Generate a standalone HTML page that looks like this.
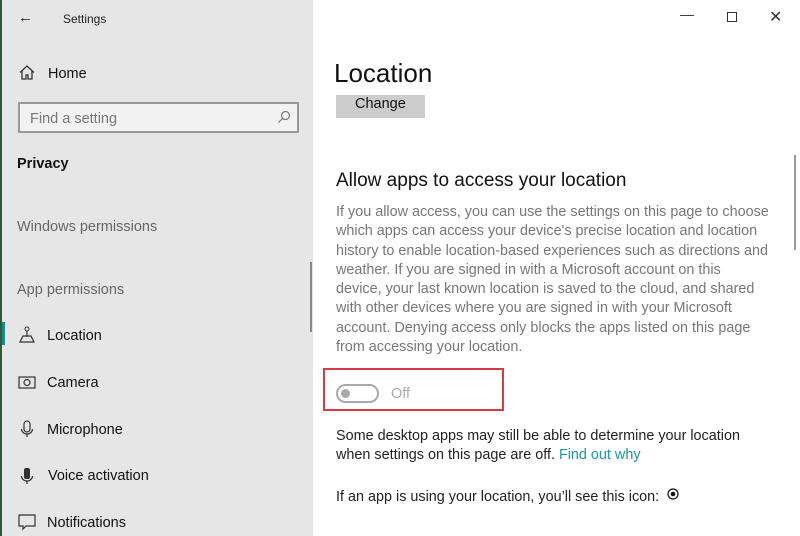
<!DOCTYPE html>
<html><head><style>
*{margin:0;padding:0;box-sizing:border-box}
body{width:800px;height:536px;overflow:hidden;font-family:"Liberation Sans",sans-serif;background:#fff;position:relative}
.side{position:absolute;left:0;top:0;width:313px;height:536px;background:#e6e6e6;border-left:2px solid #2a5a3a}
.t{position:absolute;white-space:nowrap}
.ic{position:absolute}
.p{position:absolute;left:336px;font-size:14.4px;line-height:19.3px;white-space:nowrap}
</style></head><body>
<div class="side">
<div class="t" style="left:16px;top:9px;font-size:15px;color:#222">&#8592;</div>
<div class="t" style="left:61px;top:12px;font-size:12px;color:#222">Settings</div>
<svg class="ic" style="left:17px;top:65px" width="16" height="15" viewBox="0 0 16 15"><path d="M1 7.5L8 1l7 6.5M3 6v8h4v-4h2v4h4V6" fill="none" stroke="#333" stroke-width="1.3"/></svg>
<div class="t" style="left:46px;top:66px;font-size:14.5px;color:#111">Home</div>
<div style="position:absolute;left:16px;top:102px;width:281px;height:31px;border:2px solid #999;background:#f2f2f2"></div>
<div class="t" style="left:28px;top:111px;font-size:14.5px;color:#777">Find a setting</div>
<svg class="ic" style="left:275px;top:110px" width="14" height="14"><circle cx="8.5" cy="5.5" r="4" fill="none" stroke="#777" stroke-width="1.2"/><path d="M5.5 8.5L1.5 12.5" stroke="#777" stroke-width="1.2"/></svg>
<div class="t" style="left:15px;top:156px;font-size:14.5px;font-weight:bold;color:#111">Privacy</div>
<div class="t" style="left:15px;top:219px;font-size:14.5px;color:#666">Windows permissions</div>
<div class="t" style="left:15px;top:282px;font-size:14.5px;color:#666">App permissions</div>
<div style="position:absolute;left:0;top:322px;width:3px;height:23px;background:#1a8a8a"></div>
<svg class="ic" style="left:16px;top:326px" width="18" height="17"><circle cx="9" cy="3" r="2" fill="none" stroke="#333"/><path d="M9 5v6M2 16l3-6h8l3 6z" fill="none" stroke="#333" stroke-width="1.2"/></svg>
<div class="t" style="left:45px;top:328px;font-size:14.5px;color:#111">Location</div>
<svg class="ic" style="left:16px;top:375px" width="18" height="14"><rect x="1" y="2" width="16" height="11" fill="none" stroke="#333" stroke-width="1.2"/><circle cx="9" cy="7.5" r="3" fill="none" stroke="#333" stroke-width="1.2"/></svg>
<div class="t" style="left:45px;top:375px;font-size:14.5px;color:#111">Camera</div>
<svg class="ic" style="left:18px;top:420px" width="14" height="18"><rect x="4" y="1" width="6" height="11" rx="3" fill="none" stroke="#333" stroke-width="1.2"/><path d="M1.5 9a5.5 5 0 0 0 11 0M7 14v3" fill="none" stroke="#333" stroke-width="1.2"/></svg>
<div class="t" style="left:45px;top:422px;font-size:14.5px;color:#111">Microphone</div>
<svg class="ic" style="left:18px;top:467px" width="14" height="18"><rect x="4" y="1" width="6" height="11" rx="2" fill="#333"/><path d="M1.5 9a5.5 5 0 0 0 11 0M7 14v3" fill="none" stroke="#333" stroke-width="1.2"/></svg>
<div class="t" style="left:46px;top:468px;font-size:14.5px;color:#111">Voice activation</div>
<svg class="ic" style="left:16px;top:514px" width="18" height="17"><path d="M1 1h16v11H8l-3 3v-3H1z" fill="none" stroke="#333" stroke-width="1.2"/></svg>
<div class="t" style="left:45px;top:515px;font-size:14.5px;color:#111">Notifications</div>
<div style="position:absolute;left:308px;top:262px;width:2px;height:70px;background:#888"></div>
</div>
<div class="t" style="left:680px;top:6px;font-size:14px;color:#333">&#8212;</div>
<div style="position:absolute;left:727px;top:12px;width:10px;height:10px;border:1px solid #333"></div>
<div class="t" style="left:769px;top:7px;font-size:16px;color:#333">&#10005;</div>
<div class="t" style="left:334px;top:58px;font-size:26px;color:#111">Location</div>
<div style="position:absolute;left:336px;top:95px;width:89px;height:23px;background:#ccc"></div>
<div class="t" style="left:355px;top:96px;font-size:14.5px;color:#111">Change</div>
<div class="t" style="left:336px;top:170px;font-size:19px;color:#111">Allow apps to access your location</div>
<div class="p" style="top:203px;color:#777">If you allow access, you can use the settings on this page to choose<br>which apps can access your device's precise location and location<br>history to enable location-based experiences such as directions and<br>weather. If you are signed in with a Microsoft account on this<br>device, your last known location is saved to the cloud, and shared<br>with other devices where you are signed in with your Microsoft<br>account. Denying access only blocks the apps listed on this page<br>from accessing your location.</div>
<div style="position:absolute;left:323px;top:368px;width:181px;height:43px;border:2px solid #d33c45"></div>
<div style="position:absolute;left:336px;top:384px;width:43px;height:19px;border:2px solid #aaa;border-radius:10px"></div>
<div style="position:absolute;left:341px;top:389px;width:9px;height:9px;border-radius:50%;background:#aaa"></div>
<div class="t" style="left:391px;top:386px;font-size:14.5px;color:#aaa">Off</div>
<div class="p" style="top:427px;color:#222">Some desktop apps may still be able to determine your location<br>when settings on this page are off. <span style="color:#1a9a9a">Find out why</span></div>
<div class="p" style="top:488px;color:#222">If an app is using your location, you’ll see this icon:</div>
<svg class="ic" style="left:667px;top:488px" width="12" height="12"><circle cx="6" cy="6" r="5" fill="none" stroke="#111" stroke-width="1.2"/><circle cx="6" cy="6" r="2.3" fill="#111"/></svg>
<div style="position:absolute;left:794px;top:155px;width:2px;height:95px;background:#999"></div>
</body></html>
